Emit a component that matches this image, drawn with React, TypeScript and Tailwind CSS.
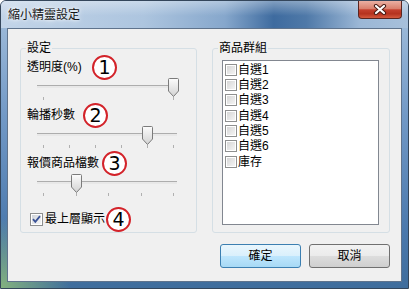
import React from "react";

function Circle({ n }: { n: number }) {
  return (
    <div className="w-[25px] h-[25px] shrink-0 rounded-full border-2 border-[#d3232a] bg-white flex items-center justify-center text-[19px] leading-none text-black [font-family:'DejaVu_Sans',sans-serif]">
      {n}
    </div>
  );
}

function Thumb() {
  return (
    <svg width="11" height="19" viewBox="0 0 11 19">
      <defs>
        <linearGradient id="thumbg" x1="0" y1="0" x2="0" y2="1">
          <stop offset="0" stopColor="#fcfcfc" />
          <stop offset="1" stopColor="#d2d2d2" />
        </linearGradient>
      </defs>
      <path
        d="M1.5 0.5H9.5Q10.5 0.5 10.5 1.5V13L5.5 18.5L0.5 13V1.5Q0.5 0.5 1.5 0.5Z"
        fill="url(#thumbg)"
        stroke="#7b7b7b"
      />
    </svg>
  );
}

function Slider({ ticks, value }: { ticks: number; value: number }) {
  const span = 130;
  const pos = (i: number) => 6 + (i * span) / (ticks - 1);
  return (
    <div className="relative ml-[16px] w-[140px] h-[28px]">
      <div className="absolute left-0 right-0 top-[8px] h-[3px] border-t border-[#adadad] bg-[#e8e8e8]" />
      {Array.from({ length: ticks }).map((_, i) => (
        <div
          key={i}
          className="absolute top-[20px] w-px h-[3px] bg-[#b0b0b0]"
          style={{ left: Math.round(pos(i)) }}
        />
      ))}
      <div className="absolute top-[1px] leading-none" style={{ left: Math.round(pos(value)) - 5 }}>
        <Thumb />
      </div>
    </div>
  );
}

function GroupBox({
  label,
  className,
  children,
}: {
  label: string;
  className: string;
  children?: React.ReactNode;
}) {
  return (
    <div className={"relative border border-[#d5dfe5] rounded-[3px] " + className}>
      <div className="absolute left-[5px] -top-[9px] px-px bg-[#f0f0f0] text-[12px] leading-[16px]">
        {label}
      </div>
      {children}
    </div>
  );
}

function LabelRow({ text, w, n }: { text: string; w: number; n: number }) {
  return (
    <div className="h-[20px] flex items-center pl-[6px]">
      <span className="shrink-0 whitespace-nowrap" style={{ width: w }}>
        {text}
      </span>
      <Circle n={n} />
    </div>
  );
}

function CheckedBox() {
  return (
    <svg width="13" height="13" viewBox="0 0 13 13" className="shrink-0">
      <defs>
        <linearGradient id="cbg" x1="0" y1="0" x2="1" y2="1">
          <stop offset="0" stopColor="#cfd3d9" />
          <stop offset="1" stopColor="#f7f7f7" />
        </linearGradient>
      </defs>
      <rect x="0.5" y="0.5" width="12" height="12" fill="#ffffff" stroke="#8e8f8f" />
      <rect x="2" y="2" width="9" height="9" fill="url(#cbg)" />
      <path d="M3 6.2L5.3 8.8L10 3.2" fill="none" stroke="#3a5296" strokeWidth="1.8" />
    </svg>
  );
}

function EmptyBox() {
  return (
    <div className="w-[12px] h-[12px] shrink-0 border border-[#8e8f8f] bg-white p-px">
      <div className="w-full h-full bg-[linear-gradient(135deg,#d6d6d6_0%,#f4f4f4_100%)]" />
    </div>
  );
}

function CloseIcon() {
  return (
    <svg width="14" height="11" viewBox="0 0 14 11">
      <path d="M3 2L11 9M11 2L3 9" stroke="#4a1d16" strokeWidth="4.2" strokeLinecap="round" />
      <path d="M3 2L11 9M11 2L3 9" stroke="#ffffff" strokeWidth="2.2" strokeLinecap="round" />
    </svg>
  );
}

export default function App() {
  const items = ["自選1", "自選2", "自選3", "自選4", "自選5", "自選6", "庫存"];
  return (
    <div className="w-[409px] h-[289px] text-[12px] text-black [font-family:'Liberation_Sans','Noto_Sans_CJK_TC',sans-serif]">
      <div className="w-full h-full flex flex-col border border-[#34465b] rounded-t-[6px] overflow-hidden bg-[radial-gradient(circle_at_0%_100%,#84b27f_0px,rgba(132,178,127,0)_70px),linear-gradient(180deg,#a6c1dd_0%,#7299c6_40%,#4b79ad_80%,#3f6d9c_100%)]">
        <div className="h-[27px] shrink-0 flex justify-between bg-[linear-gradient(180deg,rgba(255,255,255,0.35)_0%,rgba(255,255,255,0)_55%),linear-gradient(90deg,#c2d4e8_0%,#adc5df_35%,#86a7cc_55%,#3e6b9f_67%,#4f79a8_75%,#9bb7d6_88%,#a7c0db_100%)]">
          <div className="pl-[7px] flex items-center text-[12px] text-[#141414] [text-shadow:0_0_6px_#ffffff,0_0_3px_#ffffff]">
            縮小精靈設定
          </div>
          <div className="mr-[6px] w-[44px] h-[18px] flex items-center justify-center border border-t-0 border-[#5a2520] rounded-b-[4px] bg-[linear-gradient(180deg,#eab0a3_0%,#d9806d_45%,#c4402e_52%,#b5321f_75%,#d45a3f_100%)]">
            <CloseIcon />
          </div>
        </div>
        <div className="flex-1 px-[6px] pb-[6px]">
          <div className="w-full h-full border border-[#5f738c] bg-[#f0f0f0] flex flex-col">
            <div className="mt-[19px] pl-[12px] pr-[11px] flex gap-[15px]">
              <GroupBox label="設定" className="w-[177px] h-[185px] pt-[8px]">
                <LabelRow text="透明度(%)" w={65} n={1} />
                <Slider ticks={2} value={1} />
                <LabelRow text="輪播秒數" w={56} n={2} />
                <Slider ticks={6} value={4} />
                <LabelRow text="報價商品檔數" w={75} n={3} />
                <Slider ticks={5} value={1} />
                <div className="mt-[8px] h-[20px] flex items-center pl-[9px]">
                  <CheckedBox />
                  <span className="ml-[2px] w-[61px] shrink-0 whitespace-nowrap">最上層顯示</span>
                  <Circle n={4} />
                </div>
              </GroupBox>
              <GroupBox label="商品群組" className="w-[178px] h-[185px]">
                <div className="mt-[11px] ml-[9px] w-[157px] h-[165px] border border-[#828790] bg-white pt-px pl-[2px]">
                  {items.map((t) => (
                    <div key={t} className="h-[15.33px] flex items-center">
                      <EmptyBox />
                      <span className="ml-px leading-none whitespace-nowrap">{t}</span>
                    </div>
                  ))}
                </div>
              </GroupBox>
            </div>
            <div className="mt-[11px] pr-[11px] flex justify-end gap-[8px]">
              <div className="w-[81px] h-[24px] flex items-center justify-center rounded-[3px] border border-[#3c7fb1] bg-[linear-gradient(180deg,#eaf6fd_0%,#d9f0fc_50%,#bee6fd_51%,#a7d9f5_100%)]">
                確定
              </div>
              <div className="w-[81px] h-[24px] flex items-center justify-center rounded-[3px] border border-[#707070] bg-[linear-gradient(180deg,#f2f2f2_0%,#ebebeb_50%,#dddddd_51%,#cfcfcf_100%)]">
                取消
              </div>
            </div>
          </div>
        </div>
      </div>
    </div>
  );
}
